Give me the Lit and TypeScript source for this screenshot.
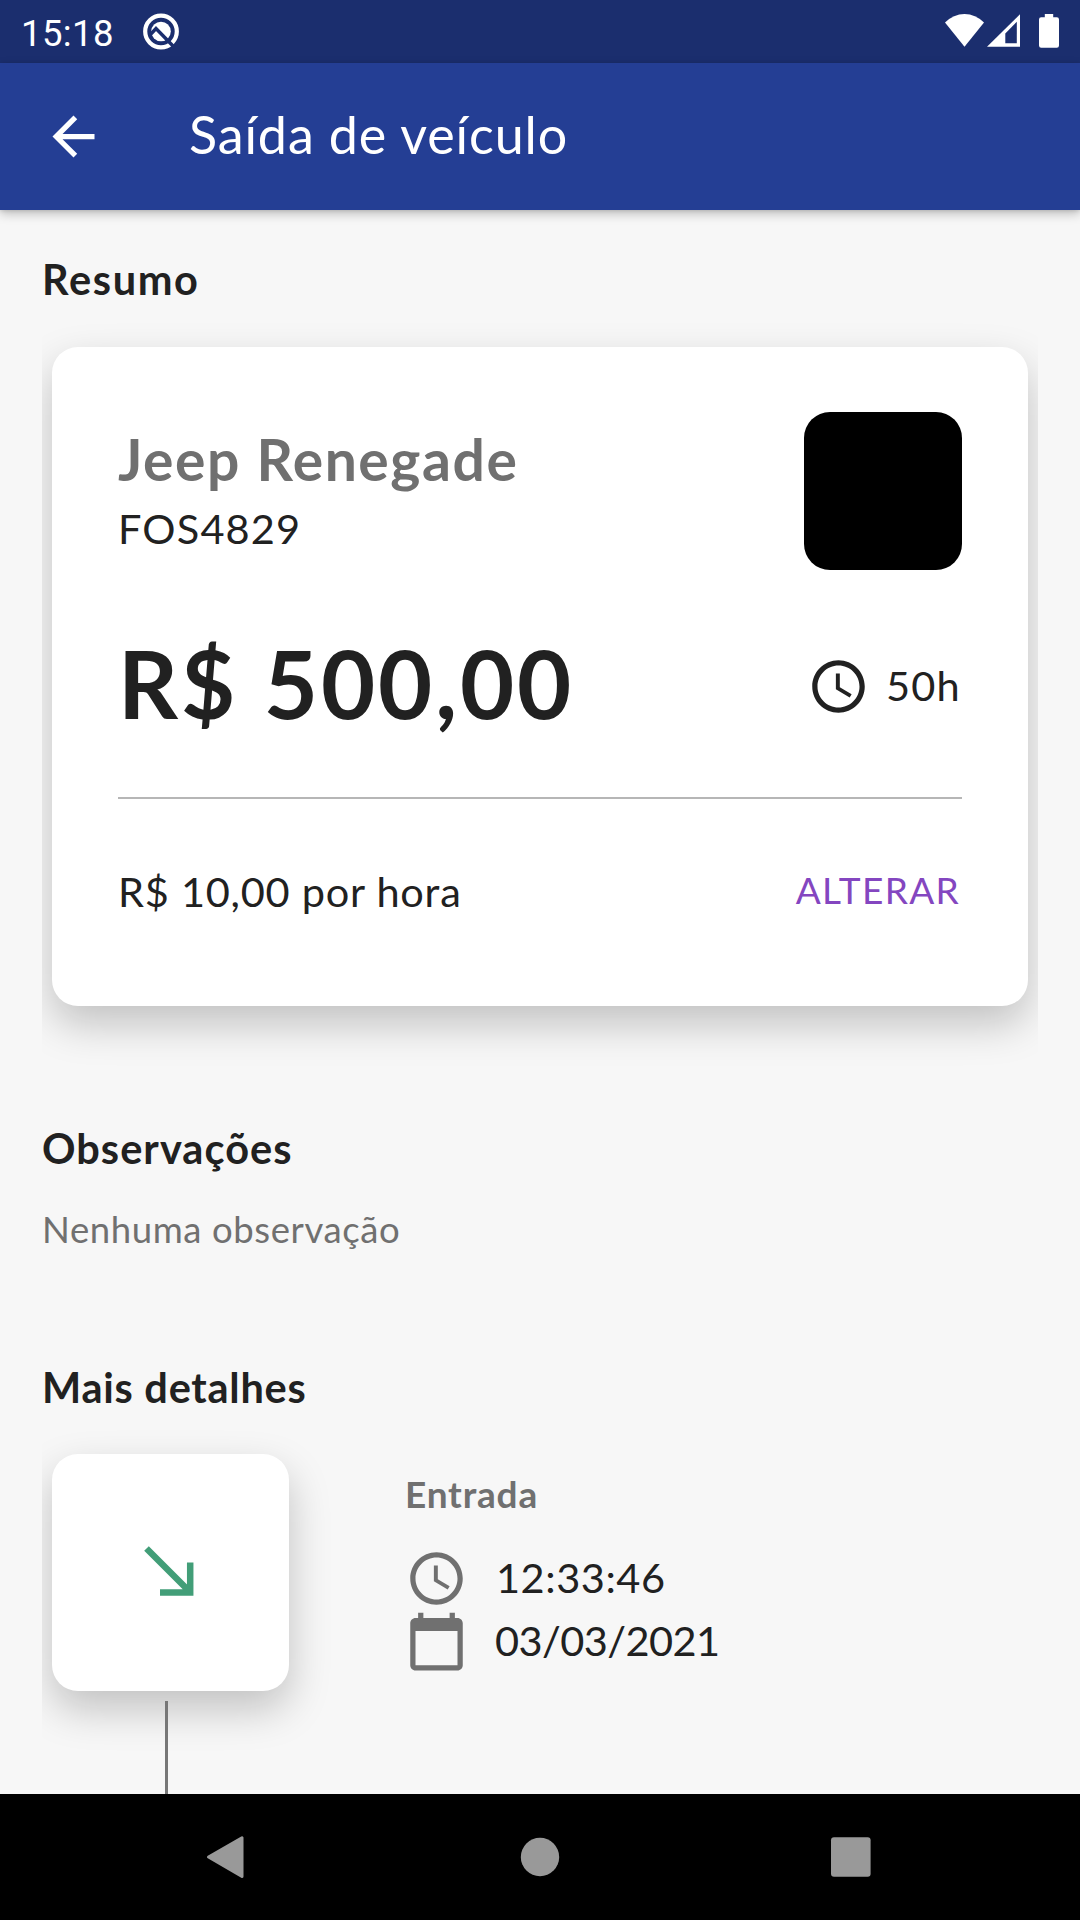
import { LitElement, html, css, svg } from "lit";
import { customElement, property } from "lit/decorators.js";

const ICONS: Record<string, unknown> = {
  back: svg`<path d="M20 11H7.83l5.59-5.59L12 4l-8 8 8 8 1.41-1.41L7.83 13H20v-2z"/>`,
  clock: svg`<path d="M11.99 2C6.47 2 2 6.48 2 12s4.47 10 9.99 10C17.52 22 22 17.52 22 12S17.52 2 11.99 2zM12 20c-4.42 0-8-3.58-8-8s3.58-8 8-8 8 3.58 8 8-3.58 8-8 8zm.5-13H11v6l5.25 3.15.75-1.23-4.5-2.67z"/>`,
  calendar: svg`<path d="M20 3h-1V1h-2v2H7V1H5v2H4c-1.1 0-2 .9-2 2v16c0 1.1.9 2 2 2h16c1.1 0 2-.9 2-2V5c0-1.1-.9-2-2-2zm0 18H4V8h16v13z"/>`,
};

@customElement("app-icon")
export class AppIcon extends LitElement {
  @property() name = "clock";

  static styles = css`
    :host { display: block; width: 63px; height: 63px; flex: none; }
    .glyph { display: block; width: 100%; height: 100%; fill: currentColor; }
  `;

  render() {
    return html`<svg class="glyph" viewBox="0 0 24 24">${ICONS[this.name]}</svg>`;
  }
}

@customElement("status-bar")
export class StatusBar extends LitElement {
  static styles = css`
    :host { display: flex; height: 63px; background: #1b2e6e; color: #fff; flex: none; box-sizing: border-box; padding: 0 21px; }
    .time { width: 122px; font: 400 36.5px/63px Roboto, sans-serif; letter-spacing: .4px; padding-top: 2px; box-sizing: border-box; }
    .badge { display: block; width: 36px; height: 63px; }
    .tray { margin-left: auto; display: block; width: 114px; height: 63px; }
  `;

  render() {
    return html`
      <span class="time">15:18</span>
      <svg class="badge" viewBox="0 0 36 63">
        <circle cx="18" cy="31.5" r="15.8" fill="none" stroke="#fff" stroke-width="4.2"/>
        <circle cx="18" cy="31.5" r="9.8" fill="#fff"/>
        <path d="M6.5 35.5l6.5-7L31.5 47.5" fill="none" stroke="#1b2e6e" stroke-width="3.4"/>
      </svg>
      <svg class="tray" viewBox="945 0 114 63">
        <path d="M964.5 46.7L945 22.6Q953.5 14 964.5 14T984 22.6z" fill="#fff"/>
        <path d="M987 46.8L1020 14.2V46.8z" fill="#fff"/>
        <path d="M1005.3 43.3V33.4L1016.8 21.8V43.3z" fill="#1b2e6e"/>
        <path d="M1044.8 14h8.4v3.3h3.6q2.2 0 2.2 2.2v26q0 2.2-2.2 2.2h-15.6q-2.2 0-2.2-2.2v-26q0-2.2 2.2-2.2h3.6z" fill="#fff"/>
      </svg>
    `;
  }
}

@customElement("nav-bar")
export class NavBar extends LitElement {
  static styles = css`
    :host { display: block; height: 126px; background: #000; flex: none; }
    .keys { display: block; width: 1080px; height: 126px; fill: #999; }
    .back { stroke: #999; stroke-width: 3; stroke-linejoin: round; }
  `;

  render() {
    return html`
      <svg class="keys" viewBox="0 0 1080 126">
        <path class="back" d="M208.5 63L242 43.8V82.4z"/>
        <circle cx="540" cy="63" r="19.2"/>
        <rect x="831" y="43.2" width="39.6" height="39.6" rx="3"/>
      </svg>
    `;
  }
}

@customElement("app-root")
export class AppRoot extends LitElement {
  static styles = css`
    :host {
      display: flex; flex-direction: column; width: 1080px; height: 1920px;
      overflow: hidden; background: #f7f7f7; color: #212121;
      font-family: Lato, "Open Sans", sans-serif; white-space: nowrap;
    }
    .appbar {
      display: flex; align-items: center; height: 147px; flex: none; z-index: 1;
      box-sizing: border-box; padding-left: 42px; gap: 84px;
      background: #243e94; color: #fff;
      box-shadow: 0 4px 10px rgba(0, 0, 0, .22), 0 1px 4px rgba(0, 0, 0, .12);
    }
    .title { font-size: 52px; line-height: 63px; padding-bottom: 4px; letter-spacing: .9px; }
    .content { flex: 1; min-height: 0; overflow: hidden; padding: 44px 42px 0; display: flex; flex-direction: column; }
    .heading { font-size: 41.5px; line-height: 50px; font-weight: 700; flex: none; }
    .summary-heading { letter-spacing: 1.65px; }
    .notes-heading { margin-top: 117px; letter-spacing: 1.05px; }
    .details-heading { margin-top: 111px; letter-spacing: .75px; }
    .note { font-size: 36.5px; line-height: 44px; margin-top: 34px; color: #707070; flex: none; letter-spacing: .6px; }

    .card-clip { margin-top: 42.5px; padding: 0 10.5px 0 10px; clip-path: inset(-60px 0 -80px 0); flex: none; }
    .card, .tile { background: #fff; border-radius: 26px; box-shadow: 0 18px 42px rgba(0, 0, 0, .22); box-sizing: border-box; }
    .card { height: 659px; padding: 65.5px 65.5px 65.5px 66px; }
    .row { display: flex; justify-content: space-between; }
    .names { display: flex; flex-direction: column; gap: 10px; padding-top: 13px; }
    .vehicle { font-size: 57px; line-height: 68px; font-weight: 700; color: #707070; letter-spacing: 1.55px; }
    .body { font-size: 41.5px; line-height: 50px; }
    .plate { letter-spacing: 1.15px; }
    .photo { width: 158px; height: 157.5px; border-radius: 26px; background: #000; }
    .charge { margin-top: 55.5px; }
    .price { font-size: 93.5px; line-height: 112px; font-weight: 700; padding-top: 2px; letter-spacing: 2.9px; }
    .duration { display: flex; width: 155px; gap: 16px; padding-top: 30px; }
    .hours { padding-top: 5px; letter-spacing: 1.2px; }
    .divider { height: 2px; margin-top: 58px; background: #b6b6b6; }
    .rate { margin-top: 67px; }
    .per-hour { letter-spacing: .75px; }
    .action { font-size: 37px; line-height: 48px; color: #8446c0; padding-right: 2px; letter-spacing: 1.3px; }

    .details { display: flex; flex: 1; min-height: 0; margin-top: 42px; clip-path: inset(-60px -80px 0 0); }
    .timeline { width: 247px; display: flex; flex-direction: column; padding-left: 10px; box-sizing: border-box; flex: none; }
    .tile { width: 237px; height: 237px; flex: none; }
    .arrow { display: block; width: 100%; height: 100%; fill: none; stroke: #429e78; stroke-width: 6.5; }
    .line { width: 3px; flex: 1; margin: 10px 0 0 112.5px; background: #777; z-index: 1; }
    .entry { padding: 18.5px 0 0 116px; }
    .entry-title { font-size: 37px; line-height: 44px; font-weight: 700; color: #707070; margin-bottom: 31px; letter-spacing: .8px; }
    .fact { display: flex; gap: 28px; height: 63px; align-items: center; }
    .fact-icon { color: #707070; }
    .fact-text { padding-bottom: 3px; }
    .time { letter-spacing: .55px; }
    .date { letter-spacing: -.55px; margin-left: -1px; }
  `;

  render() {
    return html`
      <status-bar></status-bar>
      <header class="appbar">
        <app-icon name="back"></app-icon>
        <span class="title">Saída de veículo</span>
      </header>
      <main class="content">
        <div class="heading summary-heading">Resumo</div>
        <div class="card-clip">
          <section class="card">
            <div class="row">
              <div class="names">
                <span class="vehicle">Jeep Renegade</span>
                <span class="body plate">FOS4829</span>
              </div>
              <div class="photo"></div>
            </div>
            <div class="row charge">
              <span class="price">R$ 500,00</span>
              <div class="duration">
                <app-icon name="clock"></app-icon>
                <span class="body hours">50h</span>
              </div>
            </div>
            <div class="divider"></div>
            <div class="row rate">
              <span class="body per-hour">R$ 10,00 por hora</span>
              <span class="action">ALTERAR</span>
            </div>
          </section>
        </div>
        <div class="heading notes-heading">Observações</div>
        <div class="note">Nenhuma observação</div>
        <div class="heading details-heading">Mais detalhes</div>
        <section class="details">
          <div class="timeline">
            <div class="tile">
              <svg class="arrow" viewBox="0 0 237 237">
                <path d="M94.5 94.5L138 138M108 138.4H138.2V108.5"/>
              </svg>
            </div>
            <div class="line"></div>
          </div>
          <div class="entry">
            <div class="entry-title">Entrada</div>
            <div class="fact">
              <app-icon class="fact-icon" name="clock"></app-icon>
              <span class="body fact-text time">12:33:46</span>
            </div>
            <div class="fact">
              <app-icon class="fact-icon" name="calendar"></app-icon>
              <span class="body fact-text date">03/03/2021</span>
            </div>
          </div>
        </section>
      </main>
      <nav-bar></nav-bar>
    `;
  }
}
